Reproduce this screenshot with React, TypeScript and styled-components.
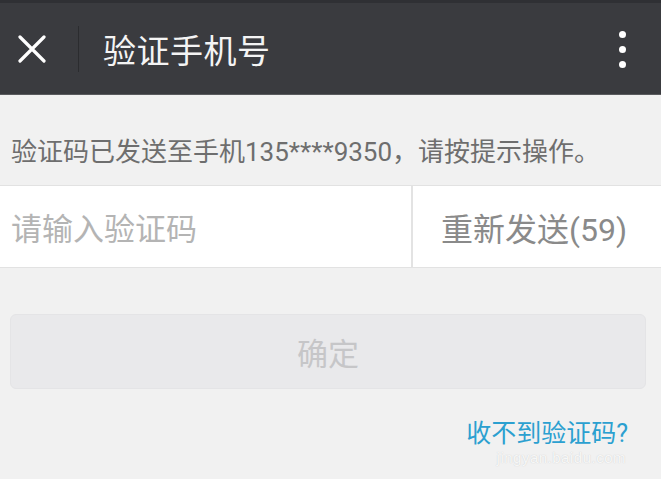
import React from "react";
import styled, { createGlobalStyle } from "styled-components";

const GlobalStyle = createGlobalStyle`
  html, body {
    margin: 0;
    padding: 0;
    background: #f1f1f1;
  }
  body {
    font-family: Roboto, "Noto Sans CJK SC", sans-serif;
  }
`;

const Page = styled.div`
  width: 661px;
  height: 479px;
  overflow: hidden;
  background: #f1f1f1;
  display: flex;
  flex-direction: column;
`;

const TopBar = styled.header`
  height: 91px;
  background: #3a3b3f;
  border-top: 3px solid #2f3034;
  border-bottom: 1px solid #5a5b5e;
  display: flex;
  align-items: center;
  color: #fff;
`;

const IconButton = styled.div`
  width: 78px;
  height: 100%;
  display: flex;
  align-items: center;
  padding-left: 18px;
  box-sizing: border-box;
`;

const Divider = styled.div`
  width: 1px;
  height: 46px;
  background: #2b2c2f;
`;

const Title = styled.h1`
  flex: 1;
  margin: 0 0 0 24px;
  font-size: 33px;
  font-weight: 400;
  letter-spacing: 0.5px;
  color: #f4f4f4;
`;

const MoreButton = styled.div`
  width: 40px;
  margin-right: 19px;
  display: flex;
  flex-direction: column;
  align-items: center;
  gap: 8px;
  padding-top: 1px;
`;

const Dot = styled.span`
  width: 7px;
  height: 7px;
  border-radius: 50%;
  background: #ffffff;
`;

const Hint = styled.p`
  margin: 0;
  padding: 41px 0 17px 11px;
  font-size: 26px;
  line-height: 32px;
  color: #6e6e6e;
  white-space: nowrap;
`;

const InputRow = styled.div`
  display: flex;
  height: 81px;
  background: #fff;
  border-top: 1px solid #e2e2e2;
  border-bottom: 1px solid #e2e2e2;
`;

const Cell = styled.div<{ $side?: boolean }>`
  display: flex;
  align-items: center;
  box-sizing: border-box;
  ${(p) =>
    p.$side
      ? `
    width: 250px;
    border-left: 2px solid #e3e3e3;
    padding-left: 28px;
    color: #8a8a8a;
    font-size: 32px;
  `
      : `
    flex: 1;
    padding-left: 11px;
    color: #b4b4b4;
    font-size: 31px;
  `}
`;

const ConfirmButton = styled.div`
  margin: 46px 15px 0 10px;
  height: 73px;
  border-radius: 6px;
  background: #e9e9eb;
  border: 1px solid #e4e4e6;
  display: flex;
  align-items: center;
  justify-content: center;
  font-size: 31px;
  color: #c6c6c8;
`;

const HelpLink = styled.a`
  align-self: flex-end;
  margin: 30px 33px 0 0;
  font-size: 25px;
  line-height: 30px;
  color: #2ba0d0;
  text-decoration: none;
  position: relative;
`;

const Watermark = styled.span`
  position: absolute;
  right: 2px;
  top: 24px;
  font-family: "Liberation Sans", sans-serif;
  font-size: 15px;
  letter-spacing: 0.5px;
  color: rgba(255, 255, 255, 0.85);
  text-shadow: 0 0 1px rgba(170, 170, 170, 0.6);
  white-space: nowrap;
`;

export default function App() {
  return (
    <Page>
      <GlobalStyle />
      <TopBar>
        <IconButton>
          <svg width="28" height="28" viewBox="0 0 28 28">
            <path
              d="M2 2L26 26M26 2L2 26"
              stroke="#ffffff"
              strokeWidth="3.2"
              strokeLinecap="round"
            />
          </svg>
        </IconButton>
        <Divider />
        <Title>验证手机号</Title>
        <MoreButton>
          <Dot />
          <Dot />
          <Dot />
        </MoreButton>
      </TopBar>

      <Hint>验证码已发送至手机135****9350，请按提示操作。</Hint>

      <InputRow>
        <Cell>请输入验证码</Cell>
        <Cell $side>重新发送(59)</Cell>
      </InputRow>

      <ConfirmButton>确定</ConfirmButton>

      <HelpLink href="#">
        收不到验证码?
        <Watermark>jingyan.baidu.com</Watermark>
      </HelpLink>
    </Page>
  );
}
